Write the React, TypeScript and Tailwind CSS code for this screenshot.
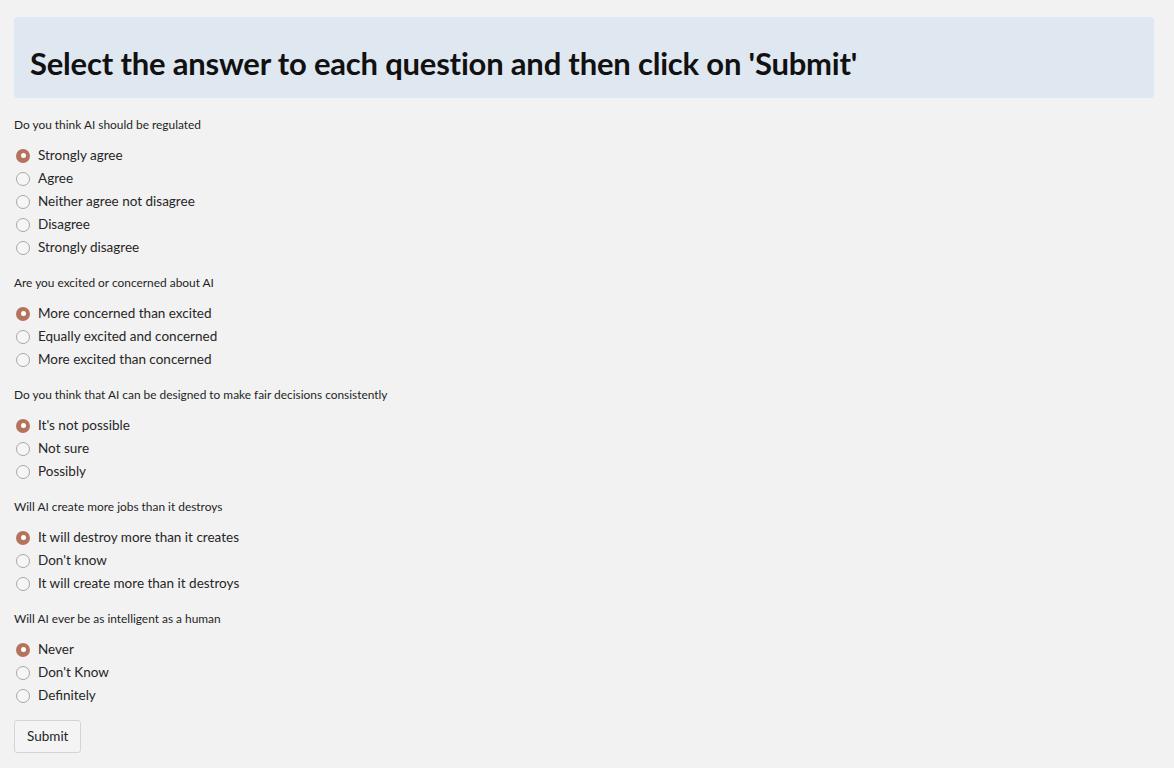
import React, { useState } from 'react';

// Survey page: one header banner, five radio questions and a submit button

interface Question {
  id: string;
  label: string;
  options: string[];
}

const questions: Question[] = [
  {
    id: 'regulated',
    label: 'Do you think AI should be regulated',
    options: ['Strongly agree', 'Agree', 'Neither agree not disagree', 'Disagree', 'Strongly disagree'],
  },
  {
    id: 'excited',
    label: 'Are you excited or concerned about AI',
    options: ['More concerned than excited', 'Equally excited and concerned', 'More excited than concerned'],
  },
  {
    id: 'fair',
    label: 'Do you think that AI can be designed to make fair decisions consistently',
    options: ["It's not possible", 'Not sure', 'Possibly'],
  },
  {
    id: 'jobs',
    label: 'Will AI create more jobs than it destroys',
    options: ['It will destroy more than it creates', "Don't know", 'It will create more than it destroys'],
  },
  {
    id: 'intelligent',
    label: 'Will AI ever be as intelligent as a human',
    options: ['Never', "Don't Know", 'Definitely'],
  },
];

function Radio({ checked }: { checked: boolean }) {
  if (checked) {
    return (
      <span className="flex h-[14px] w-[14px] shrink-0 items-center justify-center rounded-full bg-[#b5735d]">
        <span className="h-[5px] w-[5px] rounded-full bg-white" />
      </span>
    );
  }
  return <span className="h-[14px] w-[14px] shrink-0 rounded-full border-[1.5px] border-[#a8a8a8] bg-[#f6f6f6]" />;
}

export default function App() {
  const [answers, setAnswers] = useState<Record<string, number>>(() =>
    Object.fromEntries(questions.map(q => [q.id, 0]))
  );

  return (
    <div
      className="min-h-[768px] bg-[#f2f2f2] pt-[17px] pr-[20px] pl-[14px] text-[#262730]"
      style={{ fontFamily: 'Lato, "Noto Sans", sans-serif' }}
    >
      <div className="flex h-[81px] items-center rounded-[4px] bg-[#dfe7f0] px-[16px] pt-[12px]">
        <h1 className="text-[31px] font-bold tracking-[-0.2px] text-[#111111]">
          Select the answer to each question and then click on 'Submit'
        </h1>
      </div>

      <div className="mt-[19px] flex flex-col">
        {questions.map((q, qi) => (
          <div key={q.id} className={qi === 0 ? '' : 'mt-[16px]'}>
            <div className="h-[16px] text-[11.9px] leading-[16px] text-[#1f1f1f]">{q.label}</div>
            <div className="mt-[11px] flex flex-col">
              {q.options.map((opt, oi) => (
                <label
                  key={opt}
                  className="flex h-[23px] cursor-pointer items-center gap-[8px] pl-[2px]"
                  onClick={() => setAnswers(a => ({ ...a, [q.id]: oi }))}
                >
                  <Radio checked={answers[q.id] === oi} />
                  <span className="text-[13.5px] text-[#262626]">{opt}</span>
                </label>
              ))}
            </div>
          </div>
        ))}
      </div>

      <button className="mt-[13px] h-[33px] rounded-[3px] border border-[#d4d4d4] bg-[#f4f4f4] px-[12px] text-[13.5px] text-[#262626]">
        Submit
      </button>
    </div>
  );
}
